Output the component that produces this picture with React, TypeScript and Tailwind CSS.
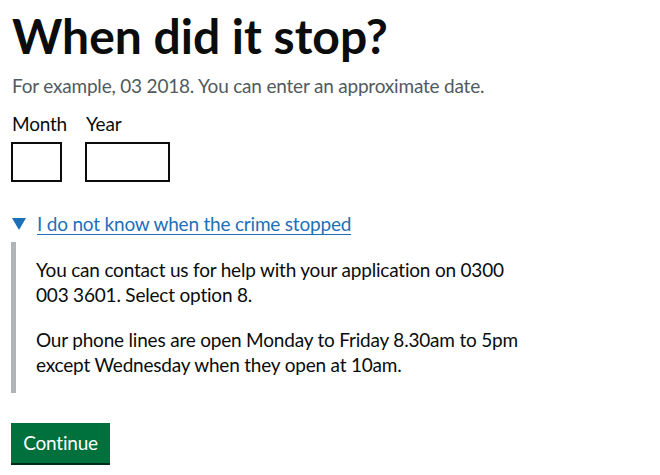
const App = () => {
  return (
    <div className="min-h-screen bg-white pl-[11px] pt-[11px] font-['Lato','Liberation_Sans',sans-serif] text-[#0b0c0c]">
      <form>
        <fieldset>
          <legend className="mb-[12px] pl-[1px] text-[48px] font-bold leading-[50px]">
            When did it stop?
          </legend>
          <div className="mb-[13px] pl-[1px] text-[19px] leading-[25px] tracking-[-0.2px] text-[#505a5f]">
            For example, 03 2018. You can enter an approximate date.
          </div>
          <div className="flex gap-[20px]">
            <div className="flex w-[54px] flex-col">
              <label className="mb-[6px] pl-[1px] text-[19px] leading-[25px] tracking-[-0.2px] whitespace-nowrap">
                Month
              </label>
              <input
                type="text"
                className="h-[40px] w-[51px] border-2 border-[#0b0c0c] outline-none"
              />
            </div>
            <div className="flex flex-col">
              <label className="mb-[6px] pl-[1px] text-[19px] leading-[25px] tracking-[-0.2px]">Year</label>
              <input
                type="text"
                className="h-[40px] w-[85px] border-2 border-[#0b0c0c] outline-none"
              />
            </div>
          </div>
        </fieldset>

        <details open className="mt-[29px] text-[19px] leading-[25px] tracking-[-0.2px]">
          <summary className="flex list-none items-center gap-[11px] pl-[1px] [&::-webkit-details-marker]:hidden">
            <span className="h-0 w-0 border-x-[7px] border-t-[12px] border-x-transparent border-t-[#1d70b8]" />
            <span className="text-[#1d70b8] underline decoration-1 underline-offset-[3px]">
              I do not know when the crime stopped
            </span>
          </summary>
          <div className="mt-[6px] w-[530px] border-l-[5px] border-[#b1b4b6] pb-[16px] pl-[20px] pr-[15px] pt-[15px]">
            <p className="mb-[20px]">
              You can contact us for help with your application on 0300 003 3601. Select option 8.
            </p>
            <p>
              Our phone lines are open Monday to Friday 8.30am to 5pm except Wednesday when they open at 10am.
            </p>
          </div>
        </details>

        <button
          type="submit"
          className="mt-[30px] h-[40px] w-[99px] bg-[#00703c] pb-[2px] text-[19px] leading-[25px] tracking-[-0.2px] text-white shadow-[0_2px_0_#002d18]"
        >
          Continue
        </button>
      </form>
    </div>
  );
};

export default App;
